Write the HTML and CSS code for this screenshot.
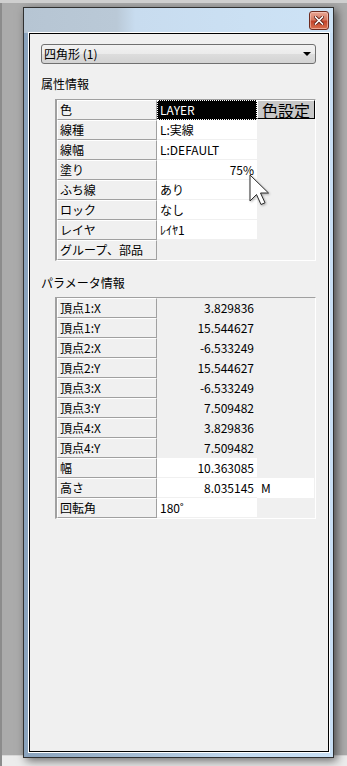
FILE: index.html
```html
<!DOCTYPE html>
<html lang="ja">
<head>
  <meta charset="UTF-8" />
  <title>プロパティ</title>
  <link rel="stylesheet" href="styles.css">
</head>
<body>
  <div class="desk">
    <div class="window">
      <div class="titlebar">
        <button class="close" aria-label="閉じる">
          <svg width="10" height="9" viewBox="0 0 10 9">
            <path d="M1.5 1 L8.5 8 M8.5 1 L1.5 8" stroke="#5a1a10" stroke-width="3.2" stroke-linecap="square"/>
            <path d="M1.5 1 L8.5 8 M8.5 1 L1.5 8" stroke="#fff" stroke-width="1.6" stroke-linecap="square"/>
          </svg>
        </button>
      </div>

      <div class="client">
        <div class="combo">
          <span>四角形 (1)</span>
          <span class="combo-arrow"></span>
        </div>

        <div class="caption">属性情報</div>
        <div class="grid grid-attr">
          <div class="row">
            <div class="key">色</div>
            <div class="val selected">LAYER</div>
            <div class="extra"><button class="colorbtn">色設定</button></div>
          </div>
          <div class="row">
            <div class="key">線種</div>
            <div class="val">L:実線</div>
            <div class="extra"></div>
          </div>
          <div class="row">
            <div class="key">線幅</div>
            <div class="val">L:DEFAULT</div>
            <div class="extra"></div>
          </div>
          <div class="row">
            <div class="key">塗り</div>
            <div class="val num">75%</div>
            <div class="extra"></div>
          </div>
          <div class="row">
            <div class="key">ふち線</div>
            <div class="val">あり</div>
            <div class="extra"></div>
          </div>
          <div class="row">
            <div class="key">ロック</div>
            <div class="val">なし</div>
            <div class="extra"></div>
          </div>
          <div class="row">
            <div class="key">レイヤ</div>
            <div class="val">ﾚｲﾔ1</div>
            <div class="extra"></div>
          </div>
          <div class="row">
            <div class="key">グループ、部品</div>
            <div class="val ro"></div>
            <div class="extra"></div>
          </div>
        </div>

        <div class="caption caption-param">パラメータ情報</div>
        <div class="grid grid-param">
          <div class="row"><div class="key">頂点1:X</div><div class="val ro num">3.829836</div><div class="extra"></div></div>
          <div class="row"><div class="key">頂点1:Y</div><div class="val ro num">15.544627</div><div class="extra"></div></div>
          <div class="row"><div class="key">頂点2:X</div><div class="val ro num">-6.533249</div><div class="extra"></div></div>
          <div class="row"><div class="key">頂点2:Y</div><div class="val ro num">15.544627</div><div class="extra"></div></div>
          <div class="row"><div class="key">頂点3:X</div><div class="val ro num">-6.533249</div><div class="extra"></div></div>
          <div class="row"><div class="key">頂点3:Y</div><div class="val ro num">7.509482</div><div class="extra"></div></div>
          <div class="row"><div class="key">頂点4:X</div><div class="val ro num">3.829836</div><div class="extra"></div></div>
          <div class="row"><div class="key">頂点4:Y</div><div class="val ro num">7.509482</div><div class="extra"></div></div>
          <div class="row"><div class="key">幅</div><div class="val num">10.363085</div><div class="extra"></div></div>
          <div class="row"><div class="key">高さ</div><div class="val num">8.035145</div><div class="extra unit">M</div></div>
          <div class="row"><div class="key">回転角</div><div class="val">180˚</div><div class="extra"></div></div>
        </div>
      </div>
    </div>
    <div class="taskstrip"></div>

    <svg class="cursor" width="22" height="34" viewBox="0 0 22 34">
      <path d="M1 1 L1 27 L7.5 20.5 L12 30.5 L16 28.8 L11.5 19 L19.5 19 Z"
            fill="#fff" stroke="#2a2a2a" stroke-width="1" stroke-linejoin="miter"/>
    </svg>
  </div>
</body>
</html>
```

FILE: styles.css
```css
body {
  margin: 0;
  font-family: "Noto Sans CJK JP", "Liberation Sans", sans-serif;
  font-size: 12px;
  color: #000;
}

.desk {
  position: relative;
  width: 347px;
  height: 766px;
  overflow: hidden;
  background: #ababab;
  border-top: 3px solid #cfcfcf;
  box-sizing: border-box;
  padding-top: 4px;
}

.desk::before {
  content: "";
  position: absolute;
  left: 0;
  top: 0;
  width: 2px;
  height: 100%;
  background: #8c8c8c;
}

.window {
  position: relative;
  z-index: 1;
  margin-left: 23px;
  width: 311px;
  height: 751px;
  box-sizing: border-box;
  border: 1px solid #303030;
  padding: 0 4px 5px 5px;
  background: linear-gradient(to right, #8aa3bd 0, #a9c0d7 40%, #c3daf0 70%, #c8dff4 100%);
  box-shadow: 3px 3px 9px rgba(0, 0, 0, 0.55);
  display: flex;
  flex-direction: column;
}

.titlebar {
  height: 25px;
  margin: 0 -4px 0 -5px;
  background: linear-gradient(to right, #b6c5d3 0, #bac9d7 30%, #c8dcef 36%, #cde3f6 100%);
  display: flex;
  justify-content: flex-end;
  align-items: flex-start;
  padding: 3px 4px 0 0;
  box-sizing: border-box;
}

.close {
  width: 20px;
  height: 19px;
  padding: 0;
  border: 1px solid #6e2b1f;
  border-radius: 3px;
  background: linear-gradient(to bottom, #e9a795 0, #d67a62 45%, #c2432a 55%, #d9704f 100%);
  box-shadow: inset 0 0 0 1px rgba(255, 220, 210, 0.5);
  display: flex;
  align-items: center;
  justify-content: center;
}

.close svg {
  display: block;
}

.client {
  flex: 1;
  background: #f0f0f0;
  border: 1px solid #000;
  box-shadow: 0 0 0 1px #fff;
  padding: 10px 12px 0 11px;
}

.combo {
  height: 20px;
  box-sizing: border-box;
  border: 1px solid #707070;
  border-radius: 3px;
  background: linear-gradient(to bottom, #f2f2f2 0, #ebebeb 50%, #dddddd 51%, #d3d3d3 100%);
  display: flex;
  align-items: center;
  justify-content: space-between;
  padding: 0 4px 0 2px;
  line-height: 18px;
}

.combo-arrow {
  width: 0;
  height: 0;
  border-left: 4px solid transparent;
  border-right: 4px solid transparent;
  border-top: 4px solid #000;
}

.caption {
  height: 16px;
  line-height: 16px;
  margin: 12px 0 7px 0;
}

.caption-param {
  margin: 14px 0 6px 0;
}

.grid {
  margin-left: 14px;
  border-top: 1px solid #a0a0a0;
  border-left: 2px solid #a0a0a0;
  border-right: 1px solid #fff;
  border-bottom: 1px solid #fff;
}

.row {
  display: flex;
  height: 20px;
  line-height: 18px;
}

.key {
  width: 100px;
  box-sizing: border-box;
  border-top: 1px solid #fff;
  border-left: 1px solid #fff;
  border-right: 1px solid #a0a0a0;
  border-bottom: 1px solid #a0a0a0;
  padding-left: 2px;
  white-space: nowrap;
}

.val {
  width: 100px;
  box-sizing: border-box;
  background: #fff;
  border-bottom: 1px solid #f0f0f0;
  padding: 1px 3px 0 3px;
  white-space: nowrap;
}

.val.ro {
  background: #f0f0f0;
}

.val.num {
  text-align: right;
}

.val.selected {
  background: #000;
  color: #fff;
  border: 1px dotted #fff;
  padding: 0 2px;
}

.extra {
  flex: 1;
}

.extra.unit {
  background: #fff;
  margin-right: 1px;
  padding: 1px 4px 0;
}

.colorbtn {
  display: block;
  width: 100%;
  height: 19px;
  margin: 0;
  padding: 0;
  border: 1px solid;
  border-color: #fff #000 #000 #fff;
  background: #c8c8c8;
  font-family: "Noto Sans CJK JP", sans-serif;
  font-size: 16px;
  line-height: 16px;
  color: #000;
}

.taskstrip {
  position: absolute;
  left: 2px;
  right: 0;
  bottom: 0;
  height: 10px;
  background: #ececec;
  border-top: 1px solid #d8d8d8;
}

.cursor {
  position: absolute;
  left: 249px;
  top: 171px;
  z-index: 2;
  filter: drop-shadow(1px 1px 1px rgba(0, 0, 0, 0.3));
}
```
